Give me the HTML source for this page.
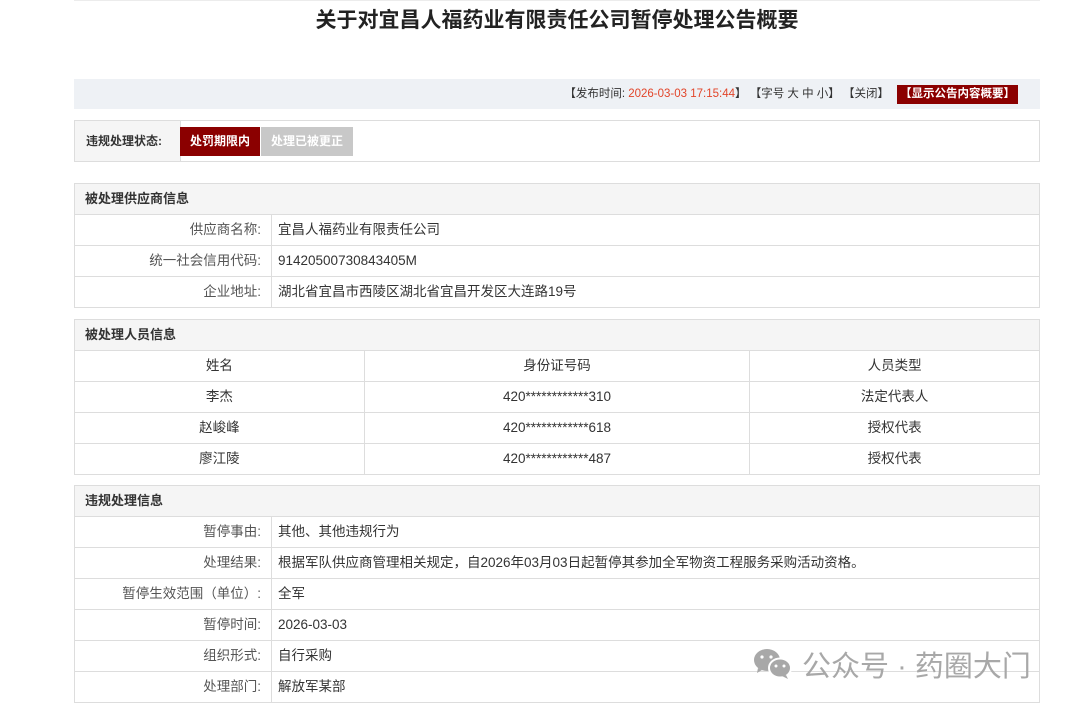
<!DOCTYPE html>
<html><head><meta charset="utf-8"><style>
body{margin:0;width:1080px;height:712px;overflow:hidden;background:#fff;font-family:"Liberation Sans","Noto Sans CJK SC",sans-serif;color:#333;position:relative}
.topline{position:absolute;left:74px;top:0;width:966px;height:1px;background:#ececec}
h1{position:absolute;left:0;width:1114px;top:6px;margin:0;text-align:center;font-size:21px;font-weight:bold;color:#222;line-height:30px}
.bar{position:absolute;left:74px;top:79px;width:966px;height:30px;background:#eef1f5;font-size:11.5px;line-height:30px;text-align:right;color:#333}
.bar .r{color:#e2452a}.bar .b{display:inline-block;background:#8b0000;color:#fff;line-height:19px;padding:0 3px;margin-right:22px;margin-left:8px;font-weight:bold}
.status{position:absolute;left:74px;top:120px;width:964px;height:40px;border:1px solid #ddd}
.status .l{position:absolute;left:0;top:0;width:105px;height:40px;background:#f5f5f5;border-right:1px solid #ddd;font-size:12px;font-weight:bold;line-height:40px;text-indent:11px}
.btn{position:absolute;top:6px;height:29px;line-height:29px;font-size:12px;color:#fff;padding:0 10px;font-weight:bold}
.sec{position:absolute;left:74px;width:964px;border:1px solid #ddd;border-bottom:none}
.sec .h{height:30px;background:#f5f5f5;border-bottom:1px solid #ddd;font-size:13px;font-weight:bold;line-height:30px;padding-left:10px}
.row{height:30px;border-bottom:1px solid #ddd;font-size:13.5px;line-height:30px;display:flex}
.row .k{width:186px;padding-right:10px;text-align:right;border-right:1px solid #ddd;color:#555}
.row .v{padding-left:6px}
.row .c{text-align:center;border-right:1px solid #ddd}
.wm{position:absolute;left:752px;top:646px;font-size:29px;color:#a8a8a8;line-height:40px}
</style></head><body>
<div class="topline"></div>
<h1>关于对宜昌人福药业有限责任公司暂停处理公告概要</h1>
<div class="bar">【发布时间: <span class="r">2026-03-03 17:15:44</span>】 【字号 大 中 小】 【关闭】<span class="b">【显示公告内容概要】</span></div>
<div class="status"><div class="l">违规处理状态:</div>
<div class="btn" style="left:105px;background:#8b0000">处罚期限内</div>
<div class="btn" style="left:186px;background:#c8c8c8">处理已被更正</div></div>
<div class="sec" style="top:183px"><div class="h">被处理供应商信息</div>
<div class="row"><div class="k">供应商名称:</div><div class="v">宜昌人福药业有限责任公司</div></div>
<div class="row"><div class="k">统一社会信用代码:</div><div class="v">91420500730843405M</div></div>
<div class="row"><div class="k">企业地址:</div><div class="v">湖北省宜昌市西陵区湖北省宜昌开发区大连路19号</div></div></div>
<div class="sec" style="top:319px"><div class="h">被处理人员信息</div>
<div class="row"><div class="c" style="width:289px">姓名</div><div class="c" style="width:385px">身份证号码</div><div class="c" style="width:289px;border:none">人员类型</div></div>
<div class="row"><div class="c" style="width:289px">李杰</div><div class="c" style="width:385px">420************310</div><div class="c" style="width:289px;border:none">法定代表人</div></div>
<div class="row"><div class="c" style="width:289px">赵峻峰</div><div class="c" style="width:385px">420************618</div><div class="c" style="width:289px;border:none">授权代表</div></div>
<div class="row"><div class="c" style="width:289px">廖江陵</div><div class="c" style="width:385px">420************487</div><div class="c" style="width:289px;border:none">授权代表</div></div></div>
<div class="sec" style="top:485px"><div class="h">违规处理信息</div>
<div class="row"><div class="k">暂停事由:</div><div class="v">其他、其他违规行为</div></div>
<div class="row"><div class="k">处理结果:</div><div class="v">根据军队供应商管理相关规定，自2026年03月03日起暂停其参加全军物资工程服务采购活动资格。</div></div>
<div class="row"><div class="k">暂停生效范围（单位）:</div><div class="v">全军</div></div>
<div class="row"><div class="k">暂停时间:</div><div class="v">2026-03-03</div></div>
<div class="row"><div class="k">组织形式:</div><div class="v">自行采购</div></div>
<div class="row"><div class="k">处理部门:</div><div class="v">解放军某部</div></div></div>
<div class="wm"><svg width="42" height="36" viewBox="0 0 42 34" style="vertical-align:-6px"><ellipse cx="15" cy="13" rx="13" ry="11" fill="#a8a8a8"/><path d="M6 21 l-1 5 5-3z" fill="#a8a8a8"/><ellipse cx="28" cy="21" rx="11" ry="9.5" fill="#a8a8a8" stroke="#fff" stroke-width="2"/><path d="M34 28 l2 4 -6-3z" fill="#a8a8a8"/><circle cx="10" cy="10" r="1.6" fill="#fff"/><circle cx="19" cy="10" r="1.6" fill="#fff"/><circle cx="24" cy="19" r="1.5" fill="#fff"/><circle cx="32" cy="19" r="1.5" fill="#fff"/></svg> 公众号 · 药圈大门</div>
</body></html>
